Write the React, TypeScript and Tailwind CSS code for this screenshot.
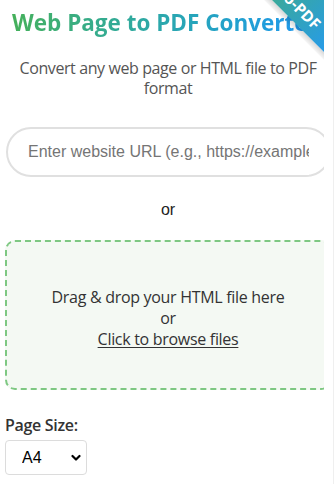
import React from "react";

const UI_FONT = { fontFamily: '"Open Sans", "Noto Sans", sans-serif' };
const FORM_FONT = { fontFamily: '"Liberation Sans", Arial, sans-serif' };

// corner ribbon, drawn as svg so the diagonal lands where the screenshot has it
function CornerRibbon() {
  return (
    <svg
      className="pointer-events-none absolute right-0 top-0 h-[60px] w-[60px]"
      viewBox="0 0 60 60"
    >
      <defs>
        <linearGradient id="ribbonFill" x1="0" y1="0" x2="1" y2="1">
          <stop offset="0" stopColor="#3aa99a" />
          <stop offset="1" stopColor="#279be8" />
        </linearGradient>
        <linearGradient id="ribbonShade" gradientUnits="userSpaceOnUse" x1="34" y1="26" x2="29" y2="31">
          <stop offset="0" stopColor="#000" stopOpacity="0.16" />
          <stop offset="1" stopColor="#000" stopOpacity="0" />
        </linearGradient>
      </defs>
      <polygon points="0,0 8,0 60,52 60,60" fill="url(#ribbonShade)" />
      <polygon points="8,0 60,52 60,0" fill="url(#ribbonFill)" />
      <text
        x="50"
        y="30.5"
        textAnchor="end"
        transform="rotate(45 50 30.5)"
        fill="#fff"
        fontSize="15.5"
        fontWeight="700"
        fontFamily='"Open Sans", "Noto Sans", sans-serif'
      >
        Web-to-PDF
      </text>
    </svg>
  );
}

export default function App() {
  return (
    <div className="h-[484px] w-[336px] bg-white">
      <div className="h-full w-[334px] border-r border-[#efefef]">
        <div className="relative h-full w-[324px] overflow-hidden">
          <div className="w-[336px] px-[5px]">
            <h1
              className="mt-[8px] whitespace-nowrap pl-[7px] text-[22.5px] font-bold leading-[30px]"
              style={UI_FONT}
            >
              <span className="inline-block bg-gradient-to-r from-[#45b05a] to-[#2196f3] bg-clip-text text-transparent">
                Web Page to PDF Converter
              </span>
            </h1>

            <p
              className="mt-[20px] text-center text-[16px] leading-[20px] tracking-[-0.4px] text-[#555]"
              style={UI_FONT}
            >
              Convert any web page or HTML file to PDF format
            </p>

            <input
              type="text"
              placeholder="Enter website URL (e.g., https://example.com)"
              className="mt-[29px] ml-[1px] block h-[50px] w-[325px] rounded-full border-2 border-[#e0e0e0] px-[20px] text-[16px] font-normal outline-none placeholder:text-[#757575]"
              style={FORM_FONT}
            />

            <div
              className="mt-[23px] text-center text-[16px] font-normal leading-[20px] text-[#222]"
              style={FORM_FONT}
            >
              or
            </div>

            <div
              className="mt-[20px] flex h-[150px] w-[326px] flex-col items-center justify-center rounded-[10px] border-2 border-dashed border-[#7ec882] bg-[#f4f9f3] pt-[6px] text-[16px] leading-[21px] tracking-[-0.3px] text-[#333]"
              style={UI_FONT}
            >
              <p>Drag &amp; drop your HTML file here</p>
              <p>or</p>
              <p className="underline underline-offset-2">Click to browse files</p>
            </div>

            <label
              className="mt-[25px] block text-[16px] font-semibold leading-[20px] tracking-[-0.3px] text-[#333]"
              style={UI_FONT}
            >
              Page Size:
            </label>

            <div className="relative mt-[5px] w-[82px]">
              <select
                defaultValue="A4"
                className="block h-[35px] w-[82px] appearance-none rounded-[4px] border border-[#dcdcdc] bg-white pl-[16px] text-[16px] text-black outline-none"
                style={FORM_FONT}
              >
                <option>A4</option>
                <option>Letter</option>
                <option>Legal</option>
              </select>
              <svg
                className="pointer-events-none absolute right-[6px] top-[14px] h-[8px] w-[10px]"
                viewBox="0 0 10 8"
                fill="none"
              >
                <path
                  d="M1.5 2 L5 5.5 L8.5 2"
                  stroke="#000"
                  strokeWidth="2.2"
                  strokeLinecap="round"
                  strokeLinejoin="round"
                />
              </svg>
            </div>
          </div>

          <CornerRibbon />
        </div>
      </div>
    </div>
  );
}
